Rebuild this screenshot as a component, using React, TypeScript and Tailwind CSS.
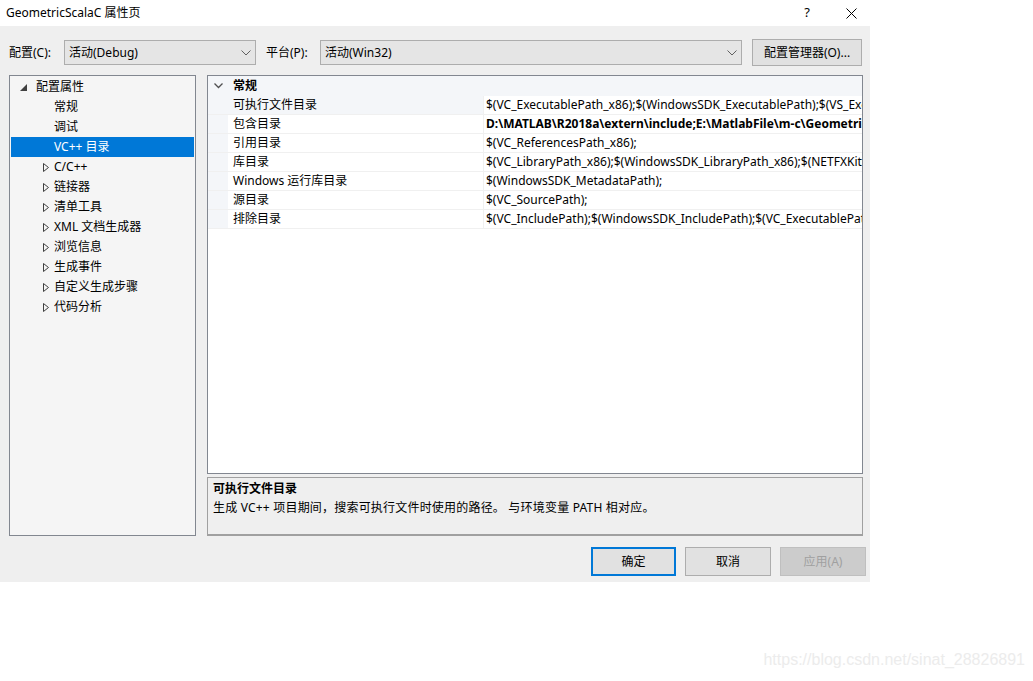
import React from "react"

const font = { fontFamily: '"Noto Sans", "Noto Sans CJK SC", sans-serif' }

const treeItems: { label: string; expandable: boolean; selected?: boolean }[] = [
  { label: "常规", expandable: false },
  { label: "调试", expandable: false },
  { label: "VC++ 目录", expandable: false, selected: true },
  { label: "C/C++", expandable: true },
  { label: "链接器", expandable: true },
  { label: "清单工具", expandable: true },
  { label: "XML 文档生成器", expandable: true },
  { label: "浏览信息", expandable: true },
  { label: "生成事件", expandable: true },
  { label: "自定义生成步骤", expandable: true },
  { label: "代码分析", expandable: true },
]

const rows: { name: string; value: string; bold?: boolean }[] = [
  { name: "可执行文件目录", value: "$(VC_ExecutablePath_x86);$(WindowsSDK_ExecutablePath);$(VS_ExecutablePath);$(MSBuild_ExecutablePath)" },
  { name: "包含目录", value: "D:\\MATLAB\\R2018a\\extern\\include;E:\\MatlabFile\\m-c\\GeometricScalaC;$(IncludePath)", bold: true },
  { name: "引用目录", value: "$(VC_ReferencesPath_x86);" },
  { name: "库目录", value: "$(VC_LibraryPath_x86);$(WindowsSDK_LibraryPath_x86);$(NETFXKitsDir)Lib\\um\\x86" },
  { name: "Windows 运行库目录", value: "$(WindowsSDK_MetadataPath);" },
  { name: "源目录", value: "$(VC_SourcePath);" },
  { name: "排除目录", value: "$(VC_IncludePath);$(WindowsSDK_IncludePath);$(VC_ExecutablePath_x86)" },
]

function Chevron() {
  return (
    <svg width="10" height="6" viewBox="0 0 10 6" className="shrink-0">
      <path d="M0.5 0.5 L5 5 L9.5 0.5" fill="none" stroke="#606060" strokeWidth="1" />
    </svg>
  )
}

function Select({ text, width }: { text: string; width: string }) {
  return (
    <div className={`${width} h-[25px] flex items-center justify-between bg-[#e5e5e5] border border-[#adadad] pl-[4px] pr-[4px]`}>
      <span className="text-[12px] text-black">{text}</span>
      <Chevron />
    </div>
  )
}

export default function App() {
  return (
    <div className="w-[1033px] h-[681px] bg-white relative overflow-hidden" style={font}>
      <div className="w-[870px] h-[582px] flex flex-col bg-[#efefef]">
        {/* title bar */}
        <div className="h-[26px] bg-white flex items-center justify-between pl-[6px] pr-[13px] shrink-0">
          <span className="text-[12px] text-black">GeometricScalaC 属性页</span>
          <div className="flex items-center gap-[36px] text-black">
            <span className="text-[13px]">?</span>
            <svg width="11" height="11" viewBox="0 0 11 11">
              <path d="M0.5 0.5 L10.5 10.5 M10.5 0.5 L0.5 10.5" stroke="#000" strokeWidth="1" />
            </svg>
          </div>
        </div>

        {/* configuration row */}
        <div className="flex items-center mt-[13px] pl-[9px] h-[27px]">
          <span className="text-[12px] w-[55px]">配置(C):</span>
          <Select text="活动(Debug)" width="w-[192px]" />
          <span className="text-[12px] ml-[10px] w-[54px]">平台(P):</span>
          <Select text="活动(Win32)" width="w-[422px]" />
          <div className="ml-[10px] w-[110px] h-[27px] bg-[#e1e1e1] border border-[#adadad] flex items-center justify-center text-[12px]">
            配置管理器(O)...
          </div>
        </div>

        {/* panels */}
        <div className="flex mt-[9px] pl-[9px]">
          <div className="w-[187px] h-[461px] bg-[#f5f5f5] border border-[#828790] pt-[1px] px-[1px]">
            <div className="h-[20px] flex items-center text-[12px]">
              <svg width="7" height="7" viewBox="0 0 7 7" className="ml-[9px]">
                <path d="M7 0 L7 7 L0 7 Z" fill="#404040" />
              </svg>
              <span className="ml-[9px]">配置属性</span>
            </div>
            {treeItems.map((it) => (
              <div
                key={it.label}
                className={`h-[20px] flex items-center text-[12px] ${it.selected ? "bg-[#0078d7] text-white" : "text-black"}`}
              >
                <div className="w-[43px] flex justify-end pr-[5px]">
                  {it.expandable && (
                    <svg width="6" height="9" viewBox="0 0 6 9">
                      <path d="M0.5 0.5 L5.5 4.5 L0.5 8.5 Z" fill="none" stroke="#404040" strokeWidth="1" />
                    </svg>
                  )}
                </div>
                <span>{it.label}</span>
              </div>
            ))}
          </div>

          <div className="ml-[11px] w-[656px] flex flex-col">
            <div className="h-[399px] bg-white border border-[#828790] overflow-hidden">
              <div className="h-[20px] flex items-center bg-[#f4f6f9]">
                <div className="w-[20px] flex justify-center">
                  <svg width="9" height="6" viewBox="0 0 9 6">
                    <path d="M0.5 0.5 L4.5 4.5 L8.5 0.5" fill="none" stroke="#505050" strokeWidth="1.3" />
                  </svg>
                </div>
                <span className="text-[12px] font-bold ml-[5px]">常规</span>
              </div>
              {rows.map((r, i) => (
                <div key={r.name} className="h-[19px] flex border-b border-[#f0f0f0]">
                  <div className="w-[20px] bg-[#f4f6f9] shrink-0" />
                  <div className={`w-[255px] shrink-0 flex items-center pl-[5px] text-[12px] ${i === 0 ? "bg-[#f4f6f9]" : "bg-white"}`}>
                    {r.name}
                  </div>
                  <div className="w-px bg-[#f0f0f0] shrink-0" />
                  <div className={`flex-1 flex items-center pl-[2px] text-[12px] whitespace-nowrap overflow-hidden ${r.bold ? "font-bold" : ""}`}>
                    {r.value}
                  </div>
                </div>
              ))}
            </div>

            <div className="mt-[3px] h-[59px] bg-[#efefef] border border-[#a0a0a0] border-b-2 px-[5px] pt-[2px] text-[12px]">
              <div className="font-bold leading-[18px]">可执行文件目录</div>
              <div className="leading-[18px] mt-[1px] tracking-[0.2px]">生成 VC++ 项目期间，搜索可执行文件时使用的路径。 与环境变量 PATH 相对应。</div>
            </div>
          </div>
        </div>

        {/* buttons */}
        <div className="flex justify-end mt-[11px] pr-[4px] gap-[9px]">
          <div className="w-[85px] h-[29px] bg-[#e1e1e1] border-2 border-[#0078d7] flex items-center justify-center text-[12px]">确定</div>
          <div className="w-[86px] h-[29px] bg-[#e1e1e1] border border-[#adadad] flex items-center justify-center text-[12px]">取消</div>
          <div className="w-[86px] h-[29px] bg-[#cccccc] border border-[#bfbfbf] flex items-center justify-center text-[12px] text-[#a0a0a0]">应用(A)</div>
        </div>
      </div>

      <div className="absolute right-[8px] bottom-[9px] text-[16px] text-[#ececec]" style={{ fontFamily: '"Liberation Sans", Arial, sans-serif' }}>
        https://blog.csdn.net/sinat_28826891
      </div>
    </div>
  )
}
